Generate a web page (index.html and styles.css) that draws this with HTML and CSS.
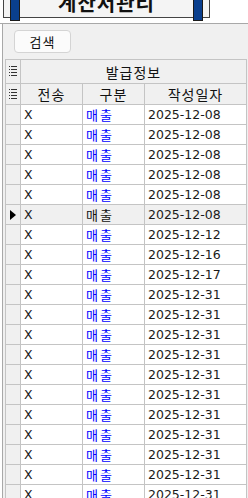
FILE: index.html
```html
<!DOCTYPE html>
<html lang="ko">
<head>
    <meta charset="UTF-8">
    <meta name="viewport" content="width=device-width, initial-scale=1.0">
    <title>계산서관리</title>
    <link rel="stylesheet" href="styles.css">
</head>
<body>
    <div class="title-bar">
        <div class="title-box">
            <span class="pin"></span>
            <h1>계산서관리</h1>
            <span class="pin"></span>
        </div>
    </div>

    <div class="panel">
        <div class="toolbar">
            <button class="btn">검색</button>
        </div>

        <table class="grid">
            <colgroup>
                <col class="col-ind">
                <col class="col-send">
                <col class="col-kind">
                <col class="col-date">
            </colgroup>
            <thead>
                <tr class="head-top">
                    <th class="ind">
                        <svg class="menu-icon" width="9" height="13" viewBox="0 0 9 13">
                            <g stroke="#333" stroke-width="1">
                                <path d="M0 1.5h1M2 1.5h6M0 4.5h1M2 4.5h6M0 7.5h1M2 7.5h6M0 10.5h1M2 10.5h6"/>
                            </g>
                        </svg>
                    </th>
                    <th colspan="3">발급정보</th>
                </tr>
                <tr class="head-sub">
                    <th class="ind">
                        <svg class="menu-icon" width="9" height="13" viewBox="0 0 9 13">
                            <g stroke="#333" stroke-width="1">
                                <path d="M0 1.5h1M2 1.5h6M0 4.5h1M2 4.5h6M0 7.5h1M2 7.5h6M0 10.5h1M2 10.5h6"/>
                            </g>
                        </svg>
                    </th>
                    <th>전송</th>
                    <th>구분</th>
                    <th>작성일자</th>
                </tr>
            </thead>
            <tbody id="rows"></tbody>
        </table>
    </div>

    <script>
        const dates = [
            '2025-12-08', '2025-12-08', '2025-12-08', '2025-12-08', '2025-12-08',
            '2025-12-08', '2025-12-12', '2025-12-16', '2025-12-17',
            '2025-12-31', '2025-12-31', '2025-12-31', '2025-12-31', '2025-12-31',
            '2025-12-31', '2025-12-31', '2025-12-31', '2025-12-31', '2025-12-31',
            '2025-12-31'
        ];
        const selected = 5;
        const rows = document.getElementById('rows');

        dates.forEach((date, i) => {
            const tr = document.createElement('tr');
            if (i === selected) tr.className = 'selected';
            tr.innerHTML =
                '<td class="ind">' + (i === selected
                    ? '<svg class="arrow" width="6" height="10" viewBox="0 0 6 10"><path d="M0 0L6 5L0 10Z" fill="#000"/></svg>'
                    : '') + '</td>' +
                '<td>X</td>' +
                '<td class="kind">매출</td>' +
                '<td>' + date + '</td>';
            rows.appendChild(tr);
        });
    </script>
</body>
</html>
```

FILE: styles.css
```css
* {
    margin: 0;
    padding: 0;
    box-sizing: border-box;
}

body {
    width: 248px;
    height: 498px;
    overflow: hidden;
    background-color: #ffffff;
    font-family: "DejaVu Sans", "Noto Sans CJK KR", sans-serif;
    color: #111;
}

.title-bar {
    display: flow-root;
    height: 24px;
    overflow: hidden;
    border-bottom: 1px solid #a8a8a8;
    background-color: #ffffff;
}

.title-box {
    display: flex;
    align-items: flex-end;
    justify-content: space-between;
    width: 207px;
    height: 41px;
    margin-left: 3px;
    margin-top: -23px;
    padding: 0 6px;
    background-color: #f4f4f4;
    border: 1px solid #444;
}

.title-box h1 {
    font-family: "Noto Sans CJK KR", sans-serif;
    font-size: 20px;
    font-weight: 700;
    line-height: 20px;
    letter-spacing: 1px;
    margin-bottom: 4px;
    color: #111;
}

.pin {
    width: 10px;
    height: 30px;
    margin-bottom: -4px;
    background-color: #0a3f8e;
    border: 1px solid #1a1a1a;
}

.panel {
    height: 474px;
    margin-left: 2px;
    padding: 6px 1px 0 2px;
    background-color: #f0f0f0;
    border-left: 1px solid #a8a8a8;
}

.toolbar {
    height: 29px;
}

.btn {
    width: 57px;
    height: 23px;
    margin-left: 9px;
    background-color: #fbfbfb;
    border: 1px solid #d4d4d4;
    border-radius: 4px;
    font-family: "Noto Sans CJK KR", sans-serif;
    font-size: 13px;
    letter-spacing: 1px;
    color: #111;
}

.grid {
    width: 241px;
    table-layout: fixed;
    border-collapse: collapse;
    background-color: #ffffff;
    border: 1px solid #a8a8a8;
}

.col-ind { width: 15px; }
.col-send { width: 62px; }
.col-kind { width: 62px; }
.col-date { width: 102px; }

.grid th {
    background-color: #f0f0f0;
    font-family: "Noto Sans CJK KR", sans-serif;
    font-size: 14px;
    font-weight: 400;
    letter-spacing: 1px;
    border: 1px solid #c4c4c4;
    color: #111;
}

.head-top th {
    height: 24px;
}

.head-sub th {
    height: 21px;
}

.grid td {
    height: 20px;
    padding-left: 3px;
    font-size: 12.5px;
    line-height: 18px;
    white-space: nowrap;
    overflow: hidden;
    border: 1px solid #c4c4c4;
    color: #1a1a1a;
}

.grid .ind {
    padding: 0;
    background-color: #f0f0f0;
    text-align: left;
    vertical-align: middle;
}

.menu-icon {
    display: block;
    margin-left: 3px;
}

.arrow {
    display: block;
    margin-left: 4px;
}

.grid td.kind {
    color: #0000ff;
    font-family: "Noto Sans CJK KR", sans-serif;
    font-size: 13px;
    letter-spacing: 2px;
}

.selected td {
    background-color: #f0f0f0;
}

.selected td.kind {
    color: #111;
}
```
